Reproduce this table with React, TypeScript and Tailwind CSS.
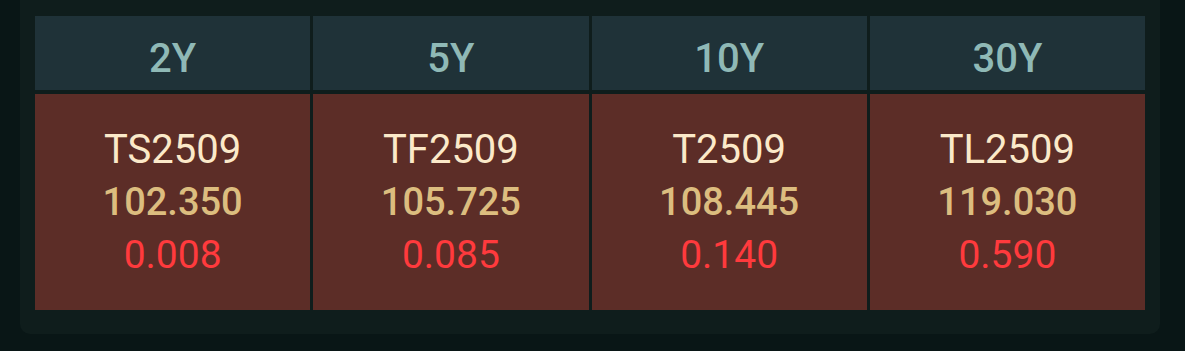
const contracts = [
  { tenor: '2Y', code: 'TS2509', price: '102.350', change: '0.008' },
  { tenor: '5Y', code: 'TF2509', price: '105.725', change: '0.085' },
  { tenor: '10Y', code: 'T2509', price: '108.445', change: '0.140' },
  { tenor: '30Y', code: 'TL2509', price: '119.030', change: '0.590' },
];

const App = () => {
  return (
    <div className="min-h-[351px] bg-[#091616] pl-5 pr-[25px] pb-[17px]" style={{ fontFamily: 'Roboto, sans-serif' }}>
      <div className="rounded-b-[10px] bg-[#0f1d1c] px-[15px] pt-4 pb-6">
        <div className="grid grid-cols-4 gap-x-[3px] gap-y-1">
          {contracts.map((c) => (
            <div
              key={c.tenor}
              className="flex h-[74px] items-center justify-center bg-[#1f3238] pt-[11px] text-[40px] font-medium text-[#8fb9b6]"
            >
              {c.tenor}
            </div>
          ))}
          {contracts.map((c) => (
            <div
              key={c.code}
              className="flex h-[216px] flex-col items-center justify-center bg-[#5c2d27] leading-[53px]"
            >
              <span className="text-[40px] text-[#fbe9c9]">{c.code}</span>
              <span className="text-[38px] font-medium text-[#dcbd7f]">{c.price}</span>
              <span className="text-[39px] text-[#ff3a3d]">{c.change}</span>
            </div>
          ))}
        </div>
      </div>
    </div>
  );
};

export default App;
